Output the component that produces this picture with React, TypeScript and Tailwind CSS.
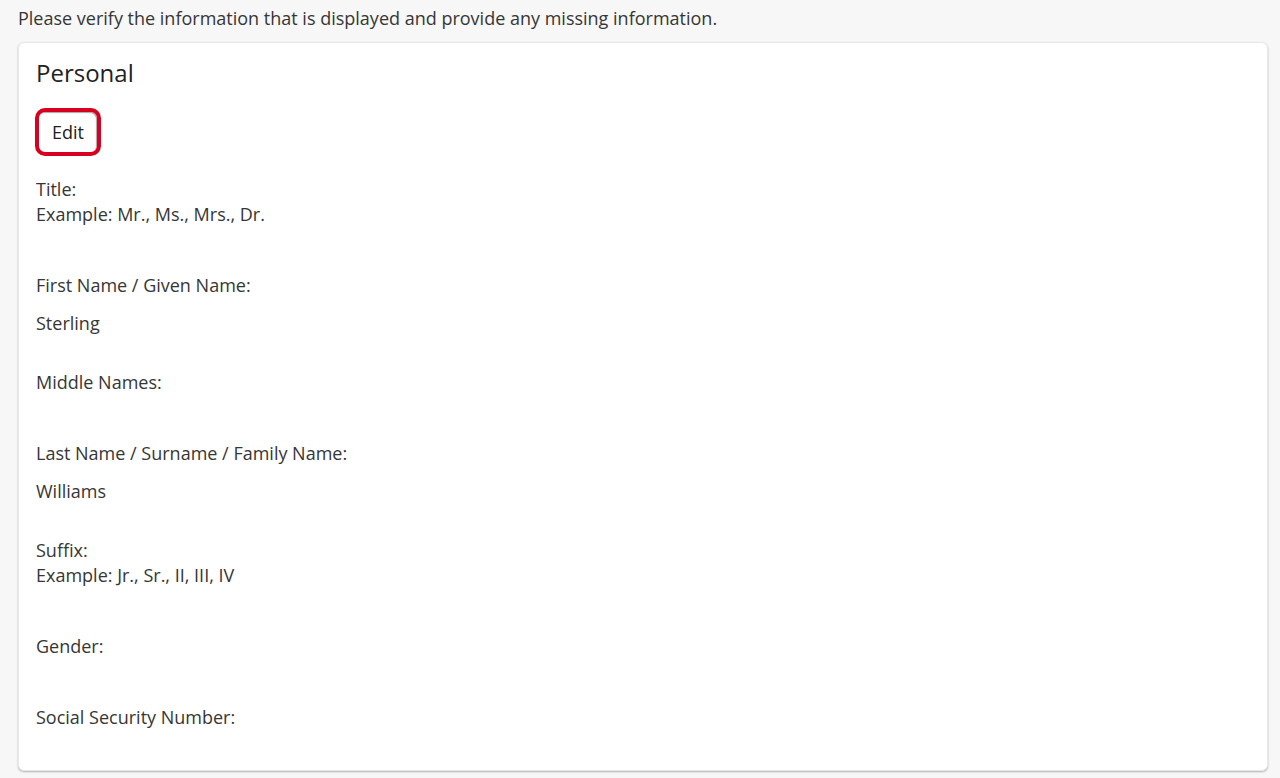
import React from "react";

interface Field {
  label: string;
  hint?: string;
  value?: string;
}

const fields: Field[] = [
  { label: "Title:", hint: "Example: Mr., Ms., Mrs., Dr." },
  { label: "First Name / Given Name:", value: "Sterling" },
  { label: "Middle Names:" },
  { label: "Last Name / Surname / Family Name:", value: "Williams" },
  { label: "Suffix:", hint: "Example: Jr., Sr., II, III, IV" },
  { label: "Gender:" },
  { label: "Social Security Number:" },
];

export default function App() {
  return (
    <div
      className="min-h-[778px] bg-[#f7f7f7] pl-[18px] pr-[12px] pt-[6px] pb-[8px] text-[18px] leading-[25px] text-[#363636]"
      style={{ fontFamily: '"Open Sans", "Liberation Sans", sans-serif' }}
    >
      <p>Please verify the information that is displayed and provide any missing information.</p>

      <div className="mt-[11px] rounded-[6px] border border-[#e8e8e8] bg-white px-[17px] pt-[15px] shadow-[0_1px_2px_rgba(0,0,0,0.28)]">
        <h2 className="text-[24px] leading-[30px] text-[#222222]">Personal</h2>

        {/* 편집 버튼 */}
        <div className="mt-[20px] flex">
          <button className="-ml-[1px] rounded-[10px] border-[4px] border-[#d8001e] px-[13px] py-[7px] text-[18px] leading-[26px] text-[#222222] shadow-[inset_-1px_1px_1px_rgba(0,0,0,0.35)]">
            Edit
          </button>
        </div>

        <div className="mt-[21px]">
          {fields.map((f, i) => (
            <div key={i} className={i === fields.length - 1 ? "pb-[28px]" : "pb-[34px]"}>
              <div>{f.label}</div>
              {f.hint && <div>{f.hint}</div>}
              <div className="pt-[12px]">
                {f.value && <div className="leading-[26px]">{f.value}</div>}
              </div>
            </div>
          ))}
        </div>
      </div>
    </div>
  );
}
